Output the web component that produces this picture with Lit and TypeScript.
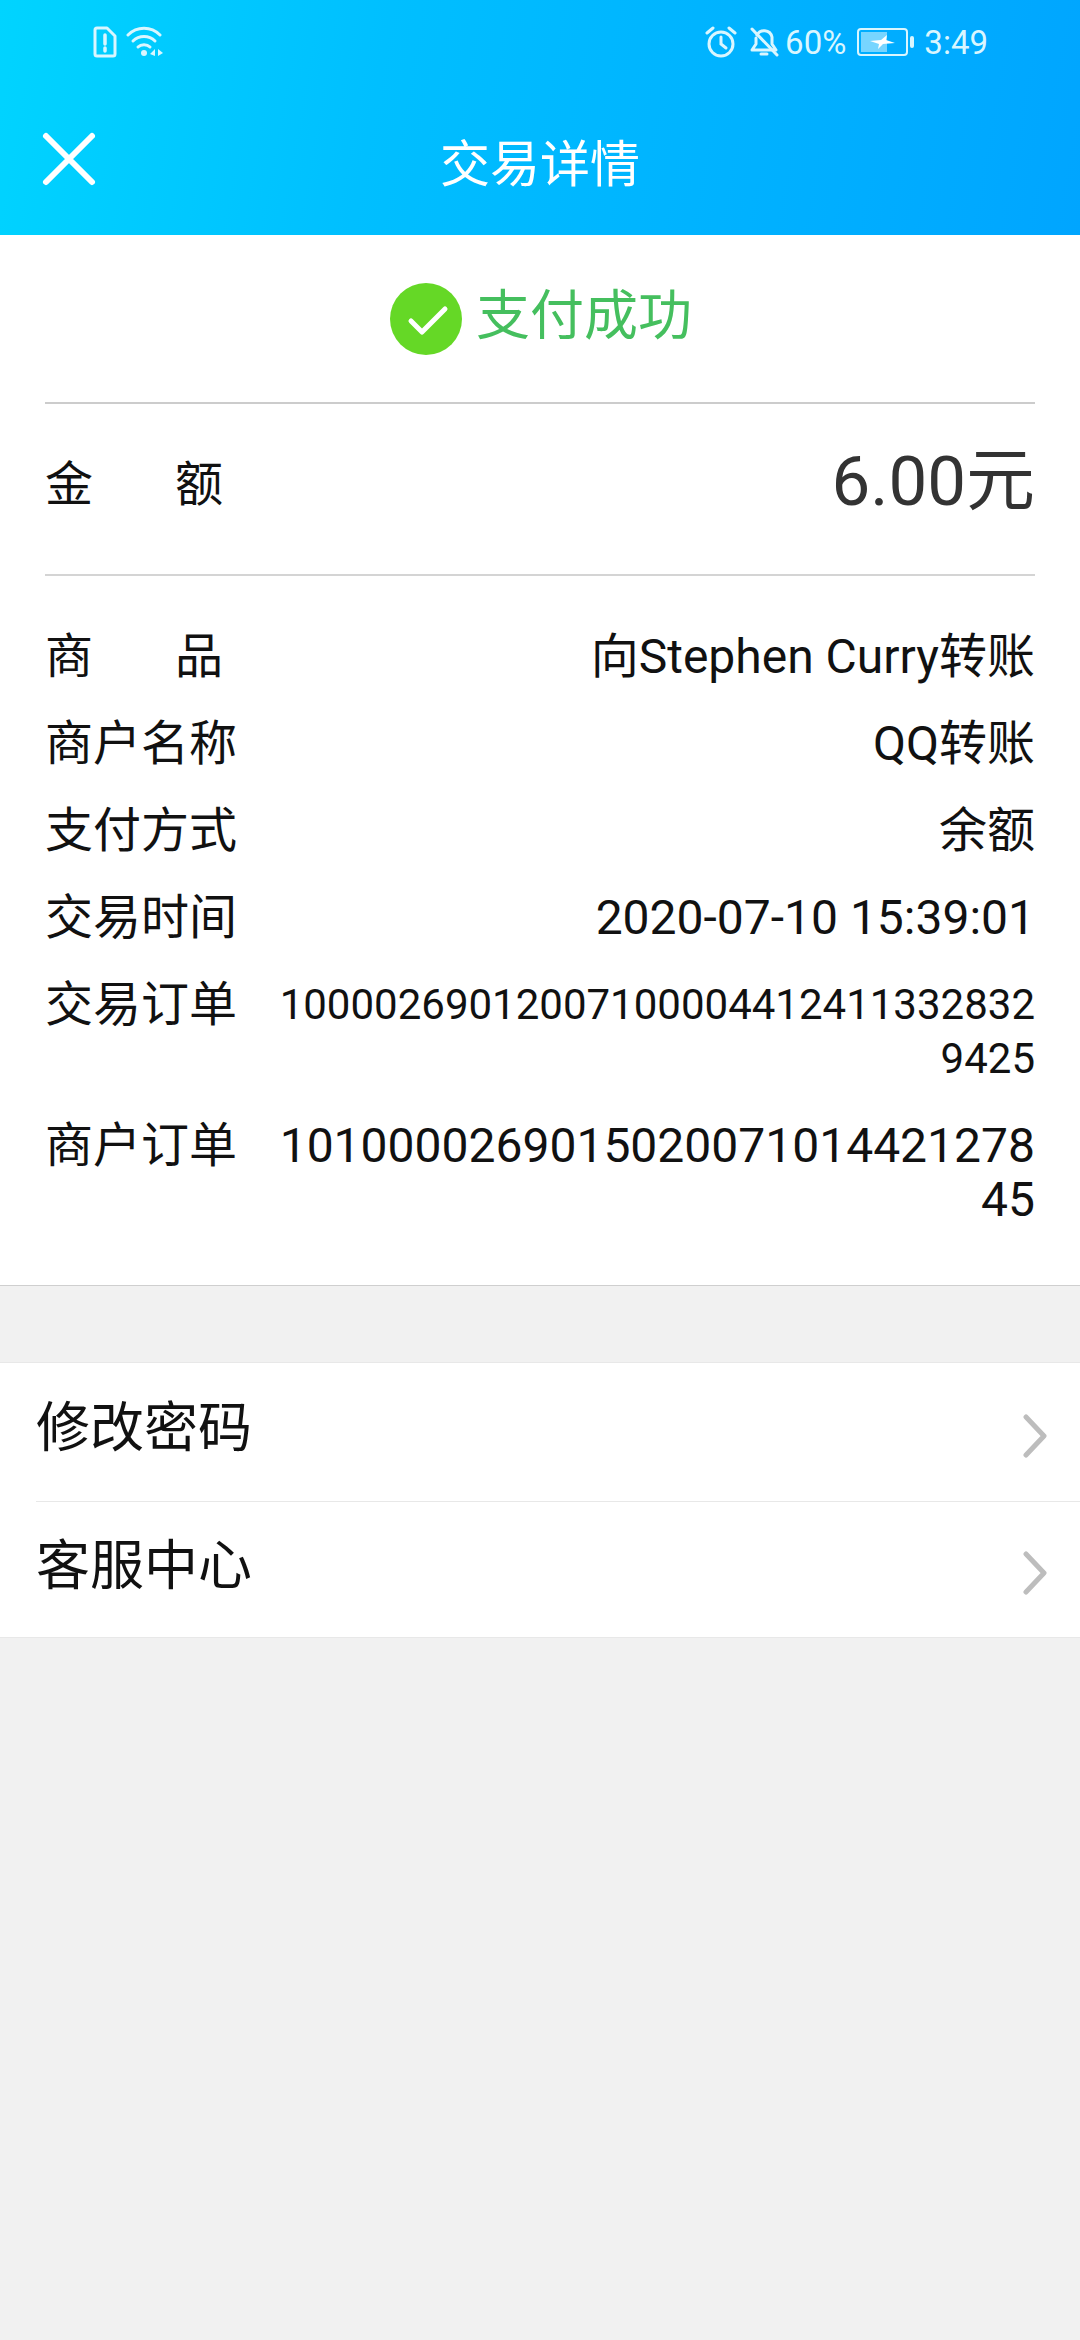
import { LitElement, html, css, svg } from "lit";
import { customElement } from "lit/decorators.js";

const rows = [
  { label: "商品", spaced: true, lines: ["向Stephen Curry转账"], cls: "" },
  { label: "商户名称", spaced: false, lines: ["QQ转账"], cls: "" },
  { label: "支付方式", spaced: false, lines: ["余额"], cls: "" },
  { label: "交易时间", spaced: false, lines: ["2020-07-10 15:39:01"], cls: "" },
  { label: "交易订单", spaced: false, lines: ["10000269012007100004412411332832", "9425"], cls: "small" },
  { label: "商户订单", spaced: false, lines: ["1010000269015020071014421278", "45"], cls: "" },
];

@customElement("app-root")
export class AppRoot extends LitElement {
  static styles = css`
    :host {
      display: block;
      width: 1080px;
      height: 2340px;
      background: #f1f1f1;
      font-family: Roboto, "Noto Sans CJK SC", sans-serif;
      color: #111;
      overflow: hidden;
    }

    .header {
      height: 235px;
      background: linear-gradient(100deg, #00d4ff 0%, #00bfff 35%, #00a5ff 100%);
      color: #fff;
      display: flex;
      flex-direction: column;
    }

    .status {
      height: 84px;
      display: flex;
      align-items: center;
      justify-content: space-between;
      padding: 0 92px 0 93px;
    }

    .status-left,
    .status-right {
      display: flex;
      align-items: center;
      font-size: 33px;
      color: #d9f6ff;
    }

    .status-left {
      gap: 9px;
    }

    .bell {
      margin-left: 12px;
    }

    .pct {
      margin-left: 6px;
    }

    .batt {
      margin-left: 11px;
    }

    .time {
      margin-left: 9px;
    }

    .nav {
      position: relative;
      flex: 1;
      display: flex;
      align-items: center;
      justify-content: center;
      font-size: 50px;
    }

    .close {
      position: absolute;
      left: 41px;
      top: 47px;
    }

    .details {
      background: #fff;
      padding: 0 45px;
      border-bottom: 1px solid #cfcfcf;
      height: 1051px;
      box-sizing: border-box;
    }

    .result {
      height: 169px;
      display: flex;
      align-items: center;
      justify-content: center;
      gap: 14px;
      color: #45bf5e;
      font-size: 54px;
      border-bottom: 2px solid #cccccc;
      padding-left: 2px;
      box-sizing: border-box;
    }

    .result span {
      padding-bottom: 14px;
    }

    .amount {
      height: 172px;
      display: flex;
      align-items: center;
      justify-content: space-between;
      border-bottom: 2px solid #d4d4d4;
      box-sizing: border-box;
    }

    .amount .label {
      padding-bottom: 9px;
    }

    .amount .val {
      font-size: 69px;
      color: #333;
      padding-bottom: 29px;
    }

    .label {
      width: 190px;
      flex: none;
      font-size: 48px;
      line-height: 54px;
      color: #111;
      white-space: nowrap;
    }

    .label.spaced {
      display: flex;
      justify-content: space-between;
      width: 178px;
      padding-right: 12px;
    }

    .list {
      display: flex;
      flex-direction: column;
      padding-top: 54px;
    }

    .row {
      display: flex;
      justify-content: space-between;
      margin-bottom: 33px;
    }

    .value {
      font-size: 48px;
      line-height: 54px;
      text-align: right;
      white-space: nowrap;
    }

    .value.small {
      font-size: 42px;
    }

    .menu {
      margin-top: 76px;
      background: #fff;
      border-top: 1px solid #e8e8e8;
      border-bottom: 1px solid #e8e8e8;
    }

    .item {
      height: 138px;
      margin-left: 36px;
      padding-right: 33px;
      display: flex;
      align-items: center;
      justify-content: space-between;
      font-size: 54px;
      box-sizing: border-box;
    }

    .item span {
      padding-bottom: 17px;
    }

    .item + .item {
      height: 136px;
      border-top: 1px solid #e8e8e8;
    }

    .item svg {
      margin-top: 7px;
    }
  `;

  private chevron() {
    return svg`<svg width="24" height="44" viewBox="0 0 24 44">
      <path d="M3 3 L21 22 L3 41" stroke="#bdbdbd" stroke-width="5" stroke-linecap="round" stroke-linejoin="round" fill="none"/>
    </svg>`;
  }

  render() {
    return html`
      <div class="header">
        <div class="status">
          <div class="status-left">
            <svg width="24" height="32" viewBox="0 0 24 32" fill="none" stroke="currentColor" stroke-width="3">
              <path d="M4 2 H14 L22 10 V28 a2 2 0 0 1 -2 2 H4 a2 2 0 0 1 -2 -2 V4 a2 2 0 0 1 2 -2 Z" stroke-linejoin="round"/>
              <path d="M12 9 V18 M12 22 V25" stroke-linecap="round" stroke-width="3.5"/>
            </svg>
            <svg width="38" height="32" viewBox="0 0 38 32" fill="none" stroke="currentColor" stroke-width="3" stroke-linecap="round">
              <path d="M2 9 C11 0 25 0 34 9"/>
              <path d="M7 15 C13 9 23 9 29 15"/>
              <path d="M12 21 C15 18 21 18 24 21"/>
              <circle cx="18" cy="27" r="3" fill="currentColor" stroke="none"/>
              <path d="M24 28 L29 23 V30 Z M32 23 V30 L37 27 Z" fill="currentColor" stroke="none"/>
            </svg>
          </div>
          <div class="status-right">
            <svg width="32" height="32" viewBox="0 0 32 32" fill="none" stroke="currentColor" stroke-width="3" stroke-linecap="round">
              <circle cx="16" cy="18" r="12"/>
              <path d="M16 11 V18 L21 22"/>
              <path d="M2 7 L8 2 M30 7 L24 2"/>
            </svg>
            <svg class="bell" width="30" height="32" viewBox="0 0 30 32" fill="none" stroke="currentColor" stroke-width="3" stroke-linecap="round" stroke-linejoin="round">
              <path d="M8 9 C11 3 21 3 23 11 V18 L27 24 H3 L7 18 V12"/>
              <path d="M12 28 H18"/>
              <path d="M3 3 L28 29"/>
            </svg>
            <span class="pct">60%</span>
            <svg class="batt" width="58" height="28" viewBox="0 0 58 28" fill="none">
              <rect x="1" y="1" width="49" height="26" rx="3" stroke="currentColor" stroke-width="2"/>
              <rect x="4" y="4" width="26" height="20" fill="currentColor" opacity=".55"/>
              <path d="M13 13 L24 12 L30 7 L29 12 L38 15 L26 16 L21 21 L22 16 Z" fill="#fff"/>
              <rect x="53" y="8" width="4" height="12" rx="2" fill="currentColor"/>
            </svg>
            <span class="time">3:49</span>
          </div>
        </div>
        <div class="nav">
          <svg class="close" width="56" height="56" viewBox="0 0 56 56">
            <path d="M5 5 L51 51 M51 5 L5 51" stroke="#fff" stroke-width="6" stroke-linecap="round"/>
          </svg>
          交易详情
        </div>
      </div>

      <div class="details">
        <div class="result">
          <svg width="72" height="72" viewBox="0 0 72 72">
            <circle cx="36" cy="36" r="36" fill="#65d826"/>
            <path d="M21 38 L32 49 L55 26" stroke="#fff" stroke-width="5" fill="none" stroke-linecap="round" stroke-linejoin="round"/>
          </svg>
          <span>支付成功</span>
        </div>
        <div class="amount">
          <div class="label spaced"><span>金</span><span>额</span></div>
          <div class="val">6.00元</div>
        </div>
        <div class="list">
          ${rows.map(
            (r) => html`
              <div class="row">
                ${r.spaced
                  ? html`<div class="label spaced"><span>${r.label[0]}</span><span>${r.label[1]}</span></div>`
                  : html`<div class="label">${r.label}</div>`}
                <div class="value ${r.cls}">${r.lines.map((l) => html`<div>${l}</div>`)}</div>
              </div>
            `
          )}
        </div>
      </div>

      <div class="menu">
        <div class="item"><span>修改密码</span>${this.chevron()}</div>
        <div class="item"><span>客服中心</span>${this.chevron()}</div>
      </div>
    `;
  }
}
